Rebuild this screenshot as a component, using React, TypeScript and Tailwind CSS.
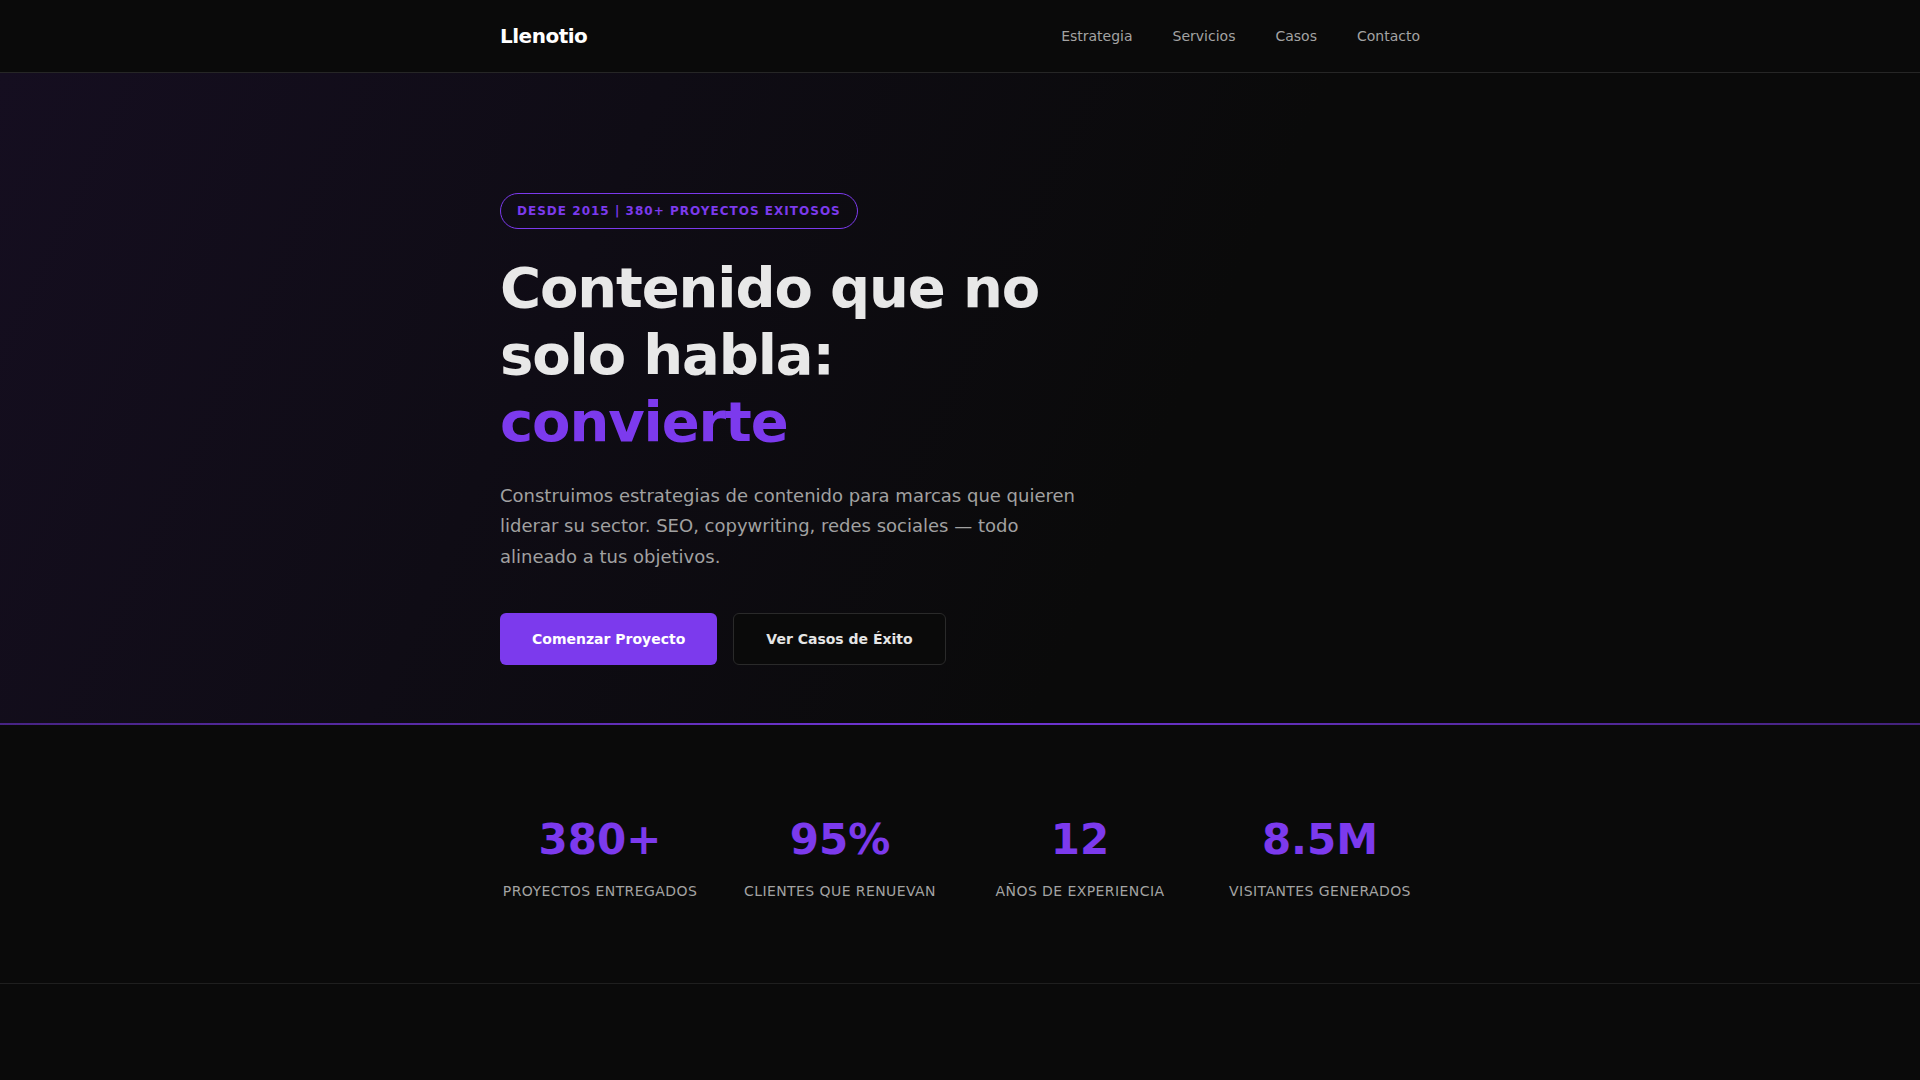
const links = ['Estrategia', 'Servicios', 'Casos', 'Contacto'];

const stats = [
  { value: '380+', label: 'Proyectos entregados' },
  { value: '95%', label: 'Clientes que renuevan' },
  { value: '12', label: 'Años de experiencia' },
  { value: '8.5M', label: 'Visitantes generados' },
];

function Nav() {
  return (
    <header className="h-[73px] bg-[#0a0a0a] border-b border-[#262626]">
      <div className="mx-auto max-w-[920px] h-full flex items-center justify-between">
        <a className="text-xl font-bold tracking-tight text-white">Llenotio</a>
        <nav className="flex items-center gap-10">
          {links.map((l) => (
            <a key={l} className="text-sm text-[#a3a3a3]">
              {l}
            </a>
          ))}
        </nav>
      </div>
    </header>
  );
}

function Hero() {
  return (
    <section className="relative bg-[linear-gradient(115deg,#150e20_0%,#0f0c15_30%,#0a0a0a_60%)] pt-[120px] pb-[60px]">
      <div className="mx-auto max-w-[920px]">
        <span className="inline-flex items-center h-9 px-4 rounded-full border border-[#7c3aed] text-xs font-bold uppercase tracking-[0.085em] text-[#7c3aed]">
          Desde 2015 | 380+ proyectos exitosos
        </span>
        <h1 className="mt-[25px] text-[56px] leading-[1.2] font-bold tracking-[-0.02em] text-[#e8e8e8]">
          Contenido que no
          <br />
          solo habla:
          <span className="block text-[#7c3aed]">convierte</span>
        </h1>
        <p className="mt-[25px] max-w-[600px] text-lg leading-[1.7] text-[#a1a1a1]">
          Construimos estrategias de contenido para marcas que quieren liderar su sector. SEO,
          copywriting, redes sociales — todo alineado a tus objetivos.
        </p>
        <div className="mt-[41px] flex gap-4">
          <button className="h-[52px] px-8 rounded-md bg-[#7c3aed] text-sm font-bold text-white">
            Comenzar Proyecto
          </button>
          <button className="h-[52px] px-8 rounded-md border border-[#2a2a2a] bg-[#0a0a0a] text-sm font-bold text-[#e5e5e5]">
            Ver Casos de Éxito
          </button>
        </div>
      </div>
      <div className="absolute left-0 right-0 bottom-0 h-[2px] bg-gradient-to-r from-[#7c3aed]/50 via-[#7c3aed]/90 to-[#7c3aed]/50" />
    </section>
  );
}

function Stats() {
  return (
    <section className="border-b border-[#1f1f1f] bg-[#0a0a0a] pt-[94px] pb-[82px]">
      <div className="mx-auto max-w-[920px] grid grid-cols-4 gap-10">
        {stats.map((s) => (
          <div key={s.label} className="flex flex-col items-center text-center">
            <div className="text-[42px] leading-none font-bold text-[#7c3aed]">{s.value}</div>
            <div className="mt-5 text-sm uppercase tracking-[0.03em] text-[#a3a3a3]">{s.label}</div>
          </div>
        ))}
      </div>
    </section>
  );
}

export default function App() {
  return (
    <div className="min-h-screen bg-[#0a0a0a] font-['DejaVu_Sans',sans-serif]">
      <Nav />
      <Hero />
      <Stats />
    </div>
  );
}
